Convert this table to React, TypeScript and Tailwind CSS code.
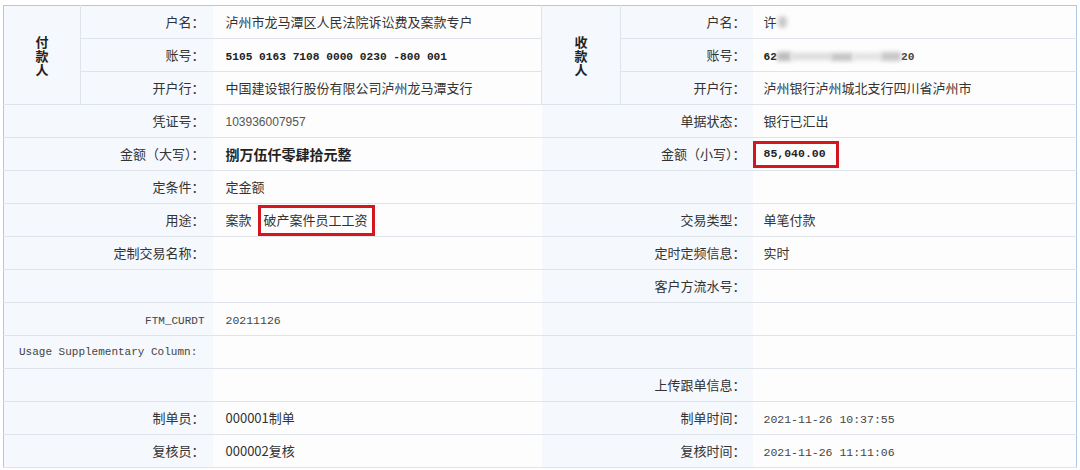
import React from 'react';

const cjk = "font-['Noto_Sans_CJK_SC','Microsoft_YaHei',sans-serif]";
const mono = "font-['Liberation_Mono','DejaVu_Sans_Mono',monospace]";

const rowCls = 'h-[33px] border-b border-[#dfe4ea]';
const labelBase = `bg-[#f5f8fc] text-right text-[13px] text-[#333] ${cjk} whitespace-nowrap`;
const leftLabel = `${labelBase} pr-[8px]`;
const rightLabel = `${labelBase} pr-[7px]`;
const valueBase = `bg-[#fdfdfd] text-[13px] text-[#333] ${cjk} whitespace-nowrap`;
const leftValue = `${valueBase} pl-[13px]`;
const rightValue = `${valueBase} pl-[11px]`;

const Party = ({ text }: { text: string }) => (
    <div className={`flex flex-col items-center gap-[1px] text-[13px] font-bold leading-[13px] text-[#222] ${cjk}`}>
        {text.split('').map((c, i) => (
            <span key={i} className="block h-[13px]">
                {c}
            </span>
        ))}
    </div>
);

const Mono = ({ children, className = 'text-[11.5px]' }: { children: React.ReactNode; className?: string }) => (
    <span className={`${mono} text-[#444] ${className}`}>{children}</span>
);

type Row = {
    l: React.ReactNode;
    lv?: React.ReactNode;
    r?: React.ReactNode;
    rv?: React.ReactNode;
    flush?: boolean;
};

const rows: Row[] = [
    {
        l: '凭证号：',
        lv: <span className="font-['Liberation_Sans',sans-serif] text-[12px] text-[#555]">103936007957</span>,
        r: '单据状态：',
        rv: '银行已汇出',
    },
    {
        l: '金额（大写）：',
        lv: <span className="text-[14px] font-bold text-[#222]">捌万伍仟零肆拾元整</span>,
        r: '金额（小写）：',
        flush: true,
        rv: (
            <span className="inline-flex items-center h-[27px] border-[3px] border-[#d4161f] pl-[8px] pr-[10px]">
                <span className={`${mono} text-[11.5px] font-bold text-[#222]`}>85,040.00</span>
            </span>
        ),
    },
    { l: '定条件：', lv: '定金额' },
    {
        l: '用途：',
        lv: (
            <span className="inline-flex items-center">
                <span>案款</span>
                <span className="ml-[6px] inline-flex items-center h-[31px] border-[3px] border-[#d4161f] pl-[3px] pr-[4px]">
                    破产案件员工工资
                </span>
            </span>
        ),
        r: '交易类型：',
        rv: '单笔付款',
    },
    { l: '定制交易名称：', r: '定时定频信息：', rv: '实时' },
    { l: '', r: '客户方流水号：' },
    { l: <Mono className="text-[11px]">FTM_CURDT</Mono>, lv: <Mono>20211126</Mono> },
    { l: <Mono className="text-[11px] pl-[15px] block text-left">Usage Supplementary Column:</Mono> },
    { l: '', r: '上传跟单信息：' },
    { l: '制单员：', lv: '000001制单', r: '制单时间：', rv: <Mono>2021-11-26 10:37:55</Mono> },
    { l: '复核员：', lv: '000002复核', r: '复核时间：', rv: <Mono>2021-11-26 11:11:06</Mono> },
];

export default function App() {
    return (
        <div className="w-[1080px] h-[470px] bg-white pt-[5px] pl-[3px]">
            <table className="w-[1074px] table-fixed border-collapse border border-[#adc9e6]">
                <colgroup>
                    <col className="w-[77px]" />
                    <col className="w-[132px]" />
                    <col className="w-[329px]" />
                    <col className="w-[79px]" />
                    <col className="w-[132px]" />
                    <col />
                </colgroup>
                <tbody>
                    <tr className={rowCls}>
                        <td rowSpan={3} className="bg-[#f5f8fc] border-r border-[#dfe4ea] align-middle">
                            <Party text="付款人" />
                        </td>
                        <td className={leftLabel}>户名：</td>
                        <td className={leftValue}>泸州市龙马潭区人民法院诉讼费及案款专户</td>
                        <td rowSpan={3} className="bg-[#f5f8fc] border-x border-[#dfe4ea] align-middle">
                            <Party text="收款人" />
                        </td>
                        <td className={rightLabel}>户名：</td>
                        <td className={rightValue}>
                            <span className="inline-flex items-center">
                                许
                                <span className="ml-[1px] inline-block w-[9px] h-[12px] bg-[#c9c9c9] blur-[2px] rounded-full" />
                            </span>
                        </td>
                    </tr>
                    <tr className={rowCls}>
                        <td className={leftLabel}>账号：</td>
                        <td className={leftValue}>
                            <span className={`${mono} text-[11.2px] font-bold text-[#222] whitespace-pre`}>
                                5105 0163 7108 0000 0230 -800 001
                            </span>
                        </td>
                        <td className={rightLabel}>账号：</td>
                        <td className={rightValue}>
                            <span className="inline-flex items-center">
                                <span className={`${mono} text-[11.2px] font-bold text-[#222]`}>62</span>
                                <span className="inline-block w-[14px] h-[9px] bg-[#bbbbbb] blur-[2px]" />
                                <span className="inline-block w-[40px] h-[7px] bg-[#dcdcdc] blur-[2px]" />
                                <span className="inline-block w-[22px] h-[8px] bg-[#c4c4c4] blur-[2px]" />
                                <span className="inline-block w-[28px] h-[7px] bg-[#e2e2e2] blur-[2px]" />
                                <span className="inline-block w-[20px] h-[9px] bg-[#c8c8c8] blur-[2px]" />
                                <span className={`${mono} text-[11.2px] font-bold text-[#444]`}>20</span>
                            </span>
                        </td>
                    </tr>
                    <tr className={rowCls}>
                        <td className={leftLabel}>开户行：</td>
                        <td className={leftValue}>中国建设银行股份有限公司泸州龙马潭支行</td>
                        <td className={rightLabel}>开户行：</td>
                        <td className={rightValue}>泸州银行泸州城北支行四川省泸州市</td>
                    </tr>
                    {rows.map((r, i) => (
                        <tr key={i} className={rowCls}>
                            <td colSpan={2} className={leftLabel}>
                                {r.l}
                            </td>
                            <td className={leftValue}>{r.lv}</td>
                            <td colSpan={2} className={rightLabel}>
                                {r.r}
                            </td>
                            <td className={r.flush ? valueBase : rightValue}>{r.rv}</td>
                        </tr>
                    ))}
                </tbody>
            </table>
        </div>
    );
}
